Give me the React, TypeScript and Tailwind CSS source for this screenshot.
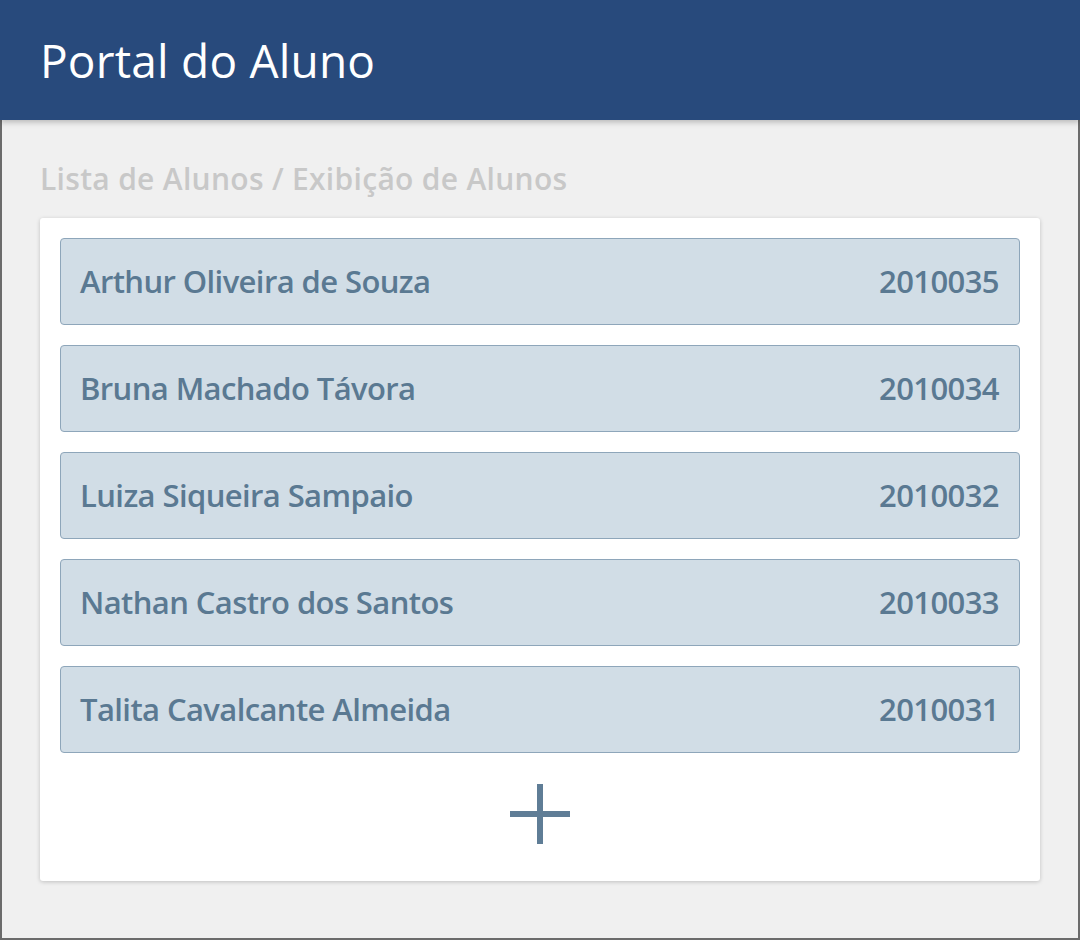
import React from "react";

const students = [
  { name: "Arthur Oliveira de Souza", id: "2010035" },
  { name: "Bruna Machado Távora", id: "2010034" },
  { name: "Luiza Siqueira Sampaio", id: "2010032" },
  { name: "Nathan Castro dos Santos", id: "2010033" },
  { name: "Talita Cavalcante Almeida", id: "2010031" },
];

const PlusIcon = () => (
  <svg width="60" height="60" viewBox="0 0 60 60" className="text-[#5f7d96]">
    <path d="M30 0V60M0 30H60" stroke="currentColor" strokeWidth="6" fill="none" />
  </svg>
);

const App: React.FC = () => {
  return (
    <div className="flex h-[940px] w-[1080px] flex-col bg-[#f0f0f0] font-['Open_Sans',sans-serif]">
      {/* Header */}
      <header className="relative z-10 flex h-[120px] shrink-0 items-center bg-[#284a7c] px-[40px] shadow-[0_2px_6px_rgba(0,0,0,0.25)]">
        <h1 className="text-[46px] leading-none tracking-[0.2px] text-white">Portal do Aluno</h1>
      </header>

      <main className="flex flex-1 flex-col border-x-2 border-b-2 border-[#6b6b6b] px-[38px]">
        {/* Breadcrumb */}
        <div className="mt-[44px] h-[54px] text-[30px] leading-none font-semibold tracking-[0.3px] text-[#c8c8c8]">
          Lista de Alunos / Exibição de Alunos
        </div>

        {/* Card */}
        <div className="rounded-[3px] bg-white px-[20px] pt-[20px] shadow-[0_1px_4px_rgba(0,0,0,0.2)]">
          <ul className="flex flex-col gap-[20px]">
            {students.map((s) => (
              <li
                key={s.id}
                className="flex h-[87px] items-center justify-between rounded-[4px] border border-[#8ea6ba] bg-[#d1dde6] pr-[20px] pl-[19px] text-[31px] font-semibold tracking-[-0.6px] text-[#5a7992]"
              >
                <span>{s.name}</span>
                <span>{s.id}</span>
              </li>
            ))}
          </ul>
          <div className="flex justify-center pt-[31px] pb-[37px]">
            <PlusIcon />
          </div>
        </div>
      </main>
    </div>
  );
};

export default App;
